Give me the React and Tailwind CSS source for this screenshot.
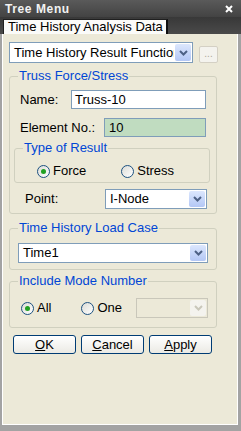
import React from 'react';

const Chevron = ({ disabled }) => (
    <svg width="9" height="6" viewBox="0 0 9 6">
        <path d="M1 1 L4.5 4.5 L8 1" stroke={disabled ? '#c9c7ba' : '#4d6185'} strokeWidth="2" fill="none" />
    </svg>
);

function Combo({ value, className = '', disabled }) {
    return (
        <div
            className={`flex border ${disabled ? 'border-[#c9c7ba] bg-[#ece9d8]' : 'border-[#7f9db9] bg-white'} ${className}`}
        >
            <div className="flex-1 pl-[4px] flex items-center overflow-hidden whitespace-nowrap">{value}</div>
            <div
                className={`w-[16px] m-px flex items-center justify-center rounded-[2px] ${
                    disabled ? 'bg-[#f4f3ee]' : 'bg-gradient-to-b from-[#dce7fd] to-[#b3c7f5]'
                }`}
            >
                <Chevron disabled={disabled} />
            </div>
        </div>
    );
}

function Radio({ checked, label, className = '' }) {
    return (
        <div className={`flex items-center ${className}`}>
            <span className="w-[13px] h-[13px] rounded-full border border-[#1c5180] bg-gradient-to-br from-[#dcdcd6] to-white flex items-center justify-center">
                {checked && <span className="w-[5px] h-[5px] rounded-full bg-[#21a121]" />}
            </span>
            <span className="ml-[3px] leading-[14px]">{label}</span>
        </div>
    );
}

function Group({ title, className = '', children }) {
    return (
        <fieldset className={`border border-[#d0d0bf] rounded-[3px] min-w-0 ${className}`}>
            <legend className="ml-[8px] px-[1px] text-[#0046d5] text-[13px] leading-[14px]">{title}</legend>
            {children}
        </fieldset>
    );
}

function Button({ first, rest }) {
    return (
        <button className="w-[63px] h-[19px] border border-[#003c74] rounded-[3px] bg-gradient-to-b from-white to-[#ebeae4] text-[13px] leading-[16px] text-black">
            <span className="underline">{first}</span>
            {rest}
        </button>
    );
}

export default function App() {
    return (
        <div className="w-[241px] h-[431px] bg-[#a3a3a3] flex flex-col text-[13px] text-black font-['Liberation_Sans',Arial,sans-serif]">
            {/* title bar */}
            <div className="h-[17px] shrink-0 bg-gradient-to-b from-[#5a5a5a] to-[#434343] flex items-center justify-between pl-[5px] pr-[8px]">
                <span className="text-[#f2f2f2] font-bold text-[12px] tracking-[0.6px] leading-[14px]">Tree Menu</span>
                <svg width="8" height="8" viewBox="0 0 8 8">
                    <path d="M1 1 L7 7 M7 1 L1 7" stroke="#ffffff" strokeWidth="2" />
                </svg>
            </div>

            {/* tab strip */}
            <div className="h-[17px] shrink-0 bg-gradient-to-b from-[#383838] to-[#4a4a4a] flex items-end pl-[3px]">
                <div className="h-[15px] w-[165px] bg-[#fbfbf9] border border-b-0 border-l-[#202020] border-t-[#202020] border-r-[#101010] border-r-2 pl-[4px] leading-[14px] whitespace-nowrap">
                    Time History Analysis Data
                </div>
            </div>

            {/* panel */}
            <div className="flex-1 ml-[2px] mr-[3px] mb-[6px] border-l border-b border-r border-white bg-[#ece9d8] pl-[6px] flex flex-col">
                <div className="flex items-start mt-[8px]">
                    <Combo value="Time History Result Function" className="w-[184px] h-[21px]" />
                    <div className="ml-[6px] mt-[4px] w-[19px] h-[17px] border border-[#d4d0c4] rounded-[2px] bg-[#f4f3ee] text-[#aca899] text-[10px] leading-[12px] flex items-end justify-center pb-[2px]">
                        ...
                    </div>
                </div>

                <Group title="Truss Force/Stress" className="w-[208px] mt-[6px] pb-[4px]">
                    <div className="flex items-center justify-between pl-[10px] pr-[10px] mt-[7px]">
                        <span>Name:</span>
                        <div className="w-[135px] h-[19px] border border-[#7f9db9] bg-white pl-[3px] leading-[17px]">Truss-10</div>
                    </div>
                    <div className="flex items-center justify-between pl-[10px] pr-[10px] mt-[8px]">
                        <span>Element No.:</span>
                        <div className="w-[102px] h-[19px] border border-[#7f9db9] bg-[#c0dcc0] pl-[4px] leading-[17px]">10</div>
                    </div>
                    <Group title="Type of Result" className="w-[196px] ml-[4px] mt-[4px] pb-[4px]">
                        <div className="flex mt-[9px]">
                            <Radio checked label="Force" className="ml-[22px]" />
                            <Radio label="Stress" className="ml-[35px]" />
                        </div>
                    </Group>
                    <div className="flex items-center justify-between pl-[15px] pr-[9px] mt-[6px]">
                        <span>Point:</span>
                        <Combo value="I-Node" className="w-[102px] h-[20px]" />
                    </div>
                </Group>

                <Group title="Time History Load Case" className="w-[208px] mt-[7px] pb-[6px]">
                    <Combo value="Time1" className="w-[190px] h-[20px] ml-[8px] mt-[8px]" />
                </Group>

                <Group title="Include Mode Number" className="w-[208px] mt-[4px] pb-[9px]">
                    <div className="flex items-center mt-[10px] h-[20px]">
                        <Radio checked label="All" className="ml-[11px]" />
                        <Radio label="One" className="ml-[30px]" />
                        <Combo disabled className="w-[72px] h-[20px] ml-[14px]" />
                    </div>
                </Group>

                <div className="flex mt-[7px] pl-[4px] gap-[5px]">
                    <Button first="O" rest="K" />
                    <Button first="C" rest="ancel" />
                    <Button first="A" rest="pply" />
                </div>
            </div>
        </div>
    );
}
